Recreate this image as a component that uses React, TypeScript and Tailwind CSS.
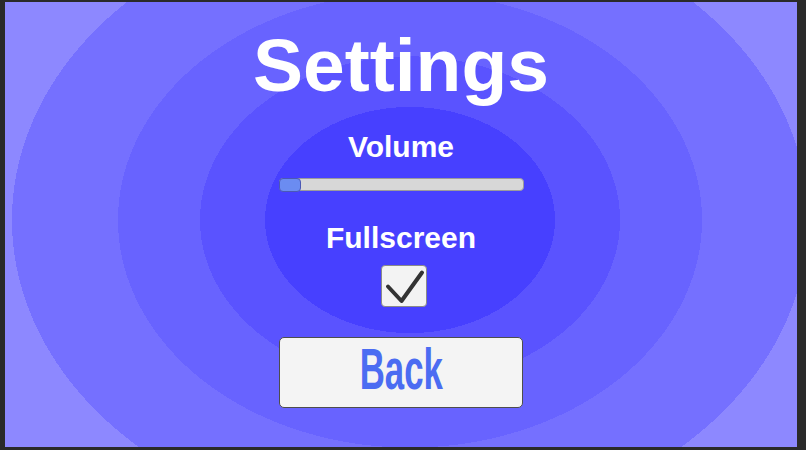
import { useState } from "react";

interface SliderProps {
  value: number;
}

// Unity-style slider: light track with a small blue handle
const VolumeSlider = ({ value }: SliderProps) => {
  return (
    <div className="relative mt-[16px] h-[13px] w-[245px] rounded-[4px] border border-[#9b9b9b] bg-[#d7d7d7]">
      <div
        className="absolute -left-px -top-px h-[14px] w-[22px] rounded-[4px] border border-[#4b58b4] bg-[#6b8cf1]"
        style={{ marginLeft: `${value * 223}px` }}
      />
    </div>
  );
};

const Toggle = ({ checked }: { checked: boolean }) => {
  return (
    <div className="mt-[12px] ml-[6px] h-[42px] w-[46px] rounded-[4px] border border-[#8a8a8a] bg-[#f3f3f3]">
      {checked && (
        <svg width="46" height="42" viewBox="0 0 46 42" className="-m-px">
          <polyline
            points="7,21.5 20.5,36 41,7.5"
            fill="none"
            stroke="#333333"
            strokeWidth="4"
            strokeLinecap="round"
            strokeLinejoin="round"
          />
        </svg>
      )}
    </div>
  );
};

export default function App() {
  const [volume] = useState<number>(0);
  const [fullscreen] = useState<boolean>(true);

  return (
    <div className="flex h-[450px] w-[806px] bg-[#2a2a2a] pt-[2px] pl-[5px] pr-[9px] pb-[3px] font-['Liberation_Sans',Arial,sans-serif]">
      <div className="flex flex-1 flex-col items-center bg-[radial-gradient(145px_113px_at_405px_218px,#4740ff_145px,#5a53ff_145px_210px,#6863ff_210px_292px,#7570ff_292px_398px,#8d88ff_398px)]">
        <h1 className="mt-[26px] text-[75px] font-bold leading-[75px] text-white">
          Settings
        </h1>

        <div className="mt-[29px] text-[30px] font-bold leading-[30px] text-white">
          Volume
        </div>
        <VolumeSlider value={volume} />

        <div className="mt-[32px] text-[30px] font-bold leading-[30px] text-white">
          Fullscreen
        </div>
        <Toggle checked={fullscreen} />

        <button
          type="button"
          className="mt-[30px] flex h-[71px] w-[244px] items-center justify-center rounded-[5px] border border-[#4d4d4d] bg-[#f4f4f4] pb-[8px]"
        >
          <span className="inline-block scale-x-[0.6] text-[58px] font-bold leading-[58px] text-[#4b6cf2]">
            Back
          </span>
        </button>
      </div>
    </div>
  );
}
